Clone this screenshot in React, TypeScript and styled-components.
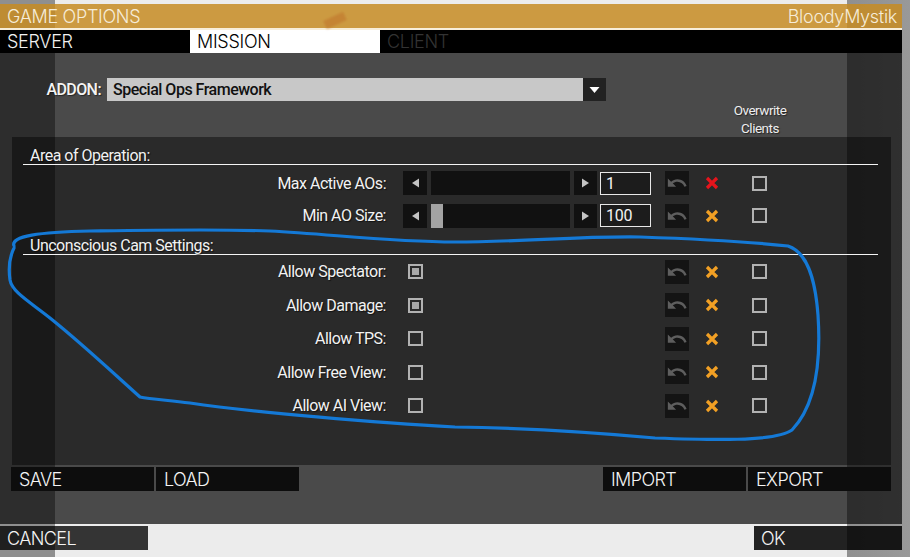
import React from "react";
import styled, { createGlobalStyle } from "styled-components";

const GlobalStyle = createGlobalStyle`
  html, body { margin: 0; padding: 0; background: #ececec; }
  * { box-sizing: border-box; }
`;

const Page = styled.div`
  position: relative;
  width: 910px;
  height: 557px;
  overflow: hidden;
  padding-top: 4px;
  display: flex;
  flex-direction: column;
  font-family: Roboto, "Noto Sans", sans-serif;
  background: linear-gradient(
    to right,
    #8f8f8f 0,
    #8f8f8f 55px,
    #ececec 55px,
    #ececec 847px,
    #8f8f8f 847px,
    #999999 910px
  );
`;

const Dialog = styled.div`
  width: 902px;
  display: flex;
  flex-direction: column;
`;

const TitleBar = styled.div`
  height: 26px;
  background: rgba(198, 140, 36, 0.86);
  border-bottom: 2px solid rgba(250, 242, 226, 0.95);
  display: flex;
  align-items: center;
  justify-content: space-between;
  padding: 0 5px 0 7px;
  font-family: Inter, "Noto Sans", sans-serif;
  font-weight: 300;
  font-size: 18px;
  letter-spacing: -0.3px;
  color: #f6ecd8;
`;

const TabBar = styled.div`
  height: 23px;
  background: #000;
  display: flex;
`;

const Tab = styled.div<{ $state: "normal" | "active" | "disabled" }>`
  width: 190px;
  height: 23px;
  line-height: 24px;
  padding-left: 7px;
  font-family: Inter, "Noto Sans", sans-serif;
  font-weight: 300;
  font-size: 18px;
  letter-spacing: -0.3px;
  background: ${(p) => (p.$state === "active" ? "#ffffff" : "#000000")};
  color: ${(p) =>
    p.$state === "active" ? "#000" : p.$state === "disabled" ? "#333" : "#f2f2f2"};
`;

const MainPanel = styled.div`
  height: 471px;
  background: rgba(0, 0, 0, 0.687);
  display: flex;
  flex-direction: column;
  padding: 25px 11px 0 11px;
`;

const AddonRow = styled.div`
  height: 23px;
  display: flex;
  align-items: center;
`;

const AddonLabel = styled.div`
  width: 90px;
  margin-right: 6px;
  text-align: right;
  font-size: 16px;
  font-weight: 500;
  color: #f4f4f4;
  letter-spacing: -0.6px;
  text-shadow: 1px 1px 1px rgba(0, 0, 0, 0.5);
`;

const Combo = styled.div`
  width: 476px;
  height: 23px;
  background: #c8c8c8;
  color: #111;
  font-size: 16px;
  font-weight: 500;
  letter-spacing: -0.5px;
  line-height: 23px;
  padding-left: 6px;
`;

const ComboButton = styled.div`
  width: 23px;
  height: 23px;
  background: #222;
  display: flex;
  align-items: center;
  justify-content: center;
`;

const HeaderRow = styled.div`
  height: 36px;
  display: flex;
  justify-content: flex-end;
`;

const OverwriteLabel = styled.div`
  width: 80px;
  margin-right: 91px;
  text-align: center;
  font-size: 13.5px;
  line-height: 18px;
  color: #eeeeee;
  letter-spacing: -0.5px;
  text-shadow: 1px 1px 1px rgba(0, 0, 0, 0.5);
`;

const InnerPanel = styled.div`
  height: 328px;
  margin-left: 1px;
  background: rgba(0, 0, 0, 0.43);
  padding: 10px 13px 0 11px;
  display: flex;
  flex-direction: column;
`;

const SectionHeader = styled.div<{ $gap?: number }>`
  height: 18px;
  margin-top: ${(p) => p.$gap ?? 0}px;
  border-bottom: 1px solid #f4f4f4;
  padding-left: 7px;
  font-size: 16px;
  line-height: 17px;
  color: #f2f2f2;
  letter-spacing: -0.5px;
  text-shadow: 1px 1px 1px rgba(0, 0, 0, 0.6);
`;

const Row = styled.div<{ $h: number; $top?: number }>`
  height: ${(p) => p.$h}px;
  margin-top: ${(p) => p.$top ?? 0}px;
  display: grid;
  grid-template-columns: 380px 248px 38px 35px 43px;
  align-items: center;
`;

const Label = styled.div`
  padding-right: 17px;
  text-align: right;
  font-size: 16px;
  color: #f2f2f2;
  letter-spacing: -0.5px;
  text-shadow: 1px 1px 1px rgba(0, 0, 0, 0.6);
`;

const Control = styled.div`
  display: flex;
  align-items: center;
  height: 24px;
`;

const ArrowButton = styled.div<{ $w: number }>`
  width: ${(p) => p.$w}px;
  height: 24px;
  background: #111;
  display: flex;
  align-items: center;
  justify-content: center;
`;

const Track = styled.div`
  width: 139px;
  height: 24px;
  margin: 0 4px;
  background: #111;
  display: flex;
`;

const Thumb = styled.div`
  width: 12px;
  height: 24px;
  background: #a3a3a3;
`;

const EditBox = styled.div`
  width: 51px;
  height: 23px;
  margin-left: 3px;
  border: 1px solid #e8e8e8;
  background: #1c1c1c;
  color: #f2f2f2;
  font-size: 16px;
  letter-spacing: -0.3px;
  line-height: 21px;
  padding-left: 5px;
`;

const Cell = styled.div`
  display: flex;
  justify-content: flex-end;
  align-items: center;
`;

const UndoButton = styled.div`
  width: 24px;
  height: 24px;
  background: #141414;
  display: flex;
  align-items: center;
  justify-content: center;
`;

const XBox = styled.div`
  width: 24px;
  height: 24px;
  display: flex;
  align-items: center;
  justify-content: center;
`;

const CheckBox = styled.div<{ $checked?: boolean }>`
  width: 15px;
  height: 15px;
  border: 2px solid #b2b2b2;
  padding: 2px;
  display: flex;
  &::after {
    content: "";
    flex: 1;
    background: ${(p) => (p.$checked ? "#a8a8a8" : "transparent")};
  }
`;

const InlineCheck = styled(CheckBox)`
  margin-left: 5px;
`;

const ButtonRow = styled.div`
  margin-top: 2px;
  display: flex;
  gap: 2px;
`;

const Spacer = styled.div`
  flex: 1;
`;

const ActionButton = styled.div<{ $bg?: string; $w?: number }>`
  width: ${(p) => p.$w ?? 143}px;
  height: 24px;
  background: ${(p) => p.$bg ?? "#0d0d0d"};
  color: #f4f4f4;
  font-family: Inter, "Noto Sans", sans-serif;
  font-weight: 300;
  font-size: 18px;
  letter-spacing: -0.6px;
  line-height: 25px;
  padding-left: 8px;
`;

const FooterButton = styled(ActionButton)`
  padding-left: 7px;
`;

const Footer = styled.div`
  margin-top: 2px;
  display: flex;
`;

const Annotation = styled.svg`
  position: absolute;
  left: 0;
  top: 0;
  pointer-events: none;
`;

const Marker = styled.div`
  position: absolute;
  left: 324px;
  top: 16px;
  width: 22px;
  height: 9px;
  background: rgba(190, 110, 40, 0.5);
  transform: rotate(-25deg);
  filter: blur(1px);
`;

const TriLeft = () => (
  <svg width="10" height="12" viewBox="0 0 10 12">
    <path d="M2 6 L9 1.5 L9 10.5 Z" fill="#c4c4c4" />
  </svg>
);
const TriRight = () => (
  <svg width="10" height="12" viewBox="0 0 10 12">
    <path d="M8 6 L1 1.5 L1 10.5 Z" fill="#c4c4c4" />
  </svg>
);

const UndoIcon = () => (
  <svg width="22" height="22" viewBox="0 0 24 24">
    <path
      d="M12.5 8c-2.65 0-5.05.99-6.9 2.6L2 7v9h9l-3.62-3.62c1.39-1.16 3.16-1.88 5.12-1.88 3.54 0 6.55 2.31 7.6 5.5l2.37-.78C21.08 11.03 17.15 8 12.5 8z"
      fill="#5e5e5e"
    />
  </svg>
);

const XIcon = ({ color }: { color: string }) => (
  <svg width="14" height="14" viewBox="0 0 14 14">
    <path d="M2 2 L12 12 M12 2 L2 12" stroke={color} strokeWidth="3.2" strokeLinecap="butt" />
  </svg>
);

type SliderRowProps = { label: string; value: string; thumb?: boolean; xColor: string; top?: number };

const SliderRow = ({ label, value, thumb, xColor, top }: SliderRowProps) => (
  <Row $h={32.5} $top={top}>
    <Label>{label}</Label>
    <Control>
      <ArrowButton $w={24}>
        <TriLeft />
      </ArrowButton>
      <Track>{thumb && <Thumb />}</Track>
      <ArrowButton $w={23}>
        <TriRight />
      </ArrowButton>
      <EditBox>{value}</EditBox>
    </Control>
    <Cell>
      <UndoButton>
        <UndoIcon />
      </UndoButton>
    </Cell>
    <Cell>
      <XBox>
        <XIcon color={xColor} />
      </XBox>
    </Cell>
    <Cell>
      <CheckBox />
    </Cell>
  </Row>
);

const CheckRow = ({ label, checked }: { label: string; checked?: boolean }) => (
  <Row $h={33.5}>
    <Label>{label}</Label>
    <Control>
      <InlineCheck $checked={checked} />
    </Control>
    <Cell>
      <UndoButton>
        <UndoIcon />
      </UndoButton>
    </Cell>
    <Cell>
      <XBox>
        <XIcon color="#f2a024" />
      </XBox>
    </Cell>
    <Cell>
      <CheckBox />
    </Cell>
  </Row>
);

export default function App() {
  return (
    <>
      <GlobalStyle />
      <Page>
        <Dialog>
          <TitleBar>
            <span>GAME OPTIONS</span>
            <span>BloodyMystik</span>
          </TitleBar>
          <TabBar>
            <Tab $state="normal">SERVER</Tab>
            <Tab $state="active">MISSION</Tab>
            <Tab $state="disabled">CLIENT</Tab>
          </TabBar>
          <MainPanel>
            <AddonRow>
              <AddonLabel>ADDON:</AddonLabel>
              <Combo>Special Ops Framework</Combo>
              <ComboButton>
                <svg width="11" height="8" viewBox="0 0 11 8">
                  <path d="M0.5 1 L10.5 1 L5.5 7 Z" fill="#ffffff" />
                </svg>
              </ComboButton>
            </AddonRow>
            <HeaderRow>
              <OverwriteLabel>
                Overwrite
                <br />
                Clients
              </OverwriteLabel>
            </HeaderRow>
            <InnerPanel>
              <SectionHeader>Area of Operation:</SectionHeader>
              <SliderRow label="Max Active AOs:" value="1" xColor="#e5141c" top={2} />
              <SliderRow label="Min AO Size:" value="100" thumb xColor="#f2a024" />
              <SectionHeader $gap={5}>Unconscious Cam Settings:</SectionHeader>
              <CheckRow label="Allow Spectator:" checked />
              <CheckRow label="Allow Damage:" checked />
              <CheckRow label="Allow TPS:" />
              <CheckRow label="Allow Free View:" />
              <CheckRow label="Allow AI View:" />
            </InnerPanel>
            <ButtonRow>
              <ActionButton>SAVE</ActionButton>
              <ActionButton>LOAD</ActionButton>
              <Spacer />
              <ActionButton>IMPORT</ActionButton>
              <ActionButton>EXPORT</ActionButton>
            </ButtonRow>
          </MainPanel>
          <Footer>
            <FooterButton $bg="rgba(0, 0, 0, 0.78)" $w={148}>
              CANCEL
            </FooterButton>
            <Spacer />
            <FooterButton $bg="rgba(0, 0, 0, 0.86)" $w={148}>
              OK
            </FooterButton>
          </Footer>
        </Dialog>
        <Marker />
        <Annotation width="910" height="557" viewBox="0 0 910 557">
          <path
            d="M14 246 C 10 236, 40 232, 90 231 C 160 230, 220 229, 270 231 C 330 234, 390 242, 455 242 C 520 242, 580 236, 640 237 C 700 239, 760 243, 788 246 C 806 252, 815 275, 818 315 C 821 360, 816 405, 792 430 C 775 442, 710 440, 655 438 C 600 433, 530 428, 455 427 C 380 423, 250 412, 190 403 C 165 400, 150 399, 140 397 C 110 370, 80 342, 50 318 C 30 302, 12 292, 10 280 C 8 266, 11 254, 14 248"
            fill="none"
            stroke="#1479d6"
            strokeWidth="3.2"
            strokeLinecap="round"
          />
        </Annotation>
      </Page>
    </>
  );
}
